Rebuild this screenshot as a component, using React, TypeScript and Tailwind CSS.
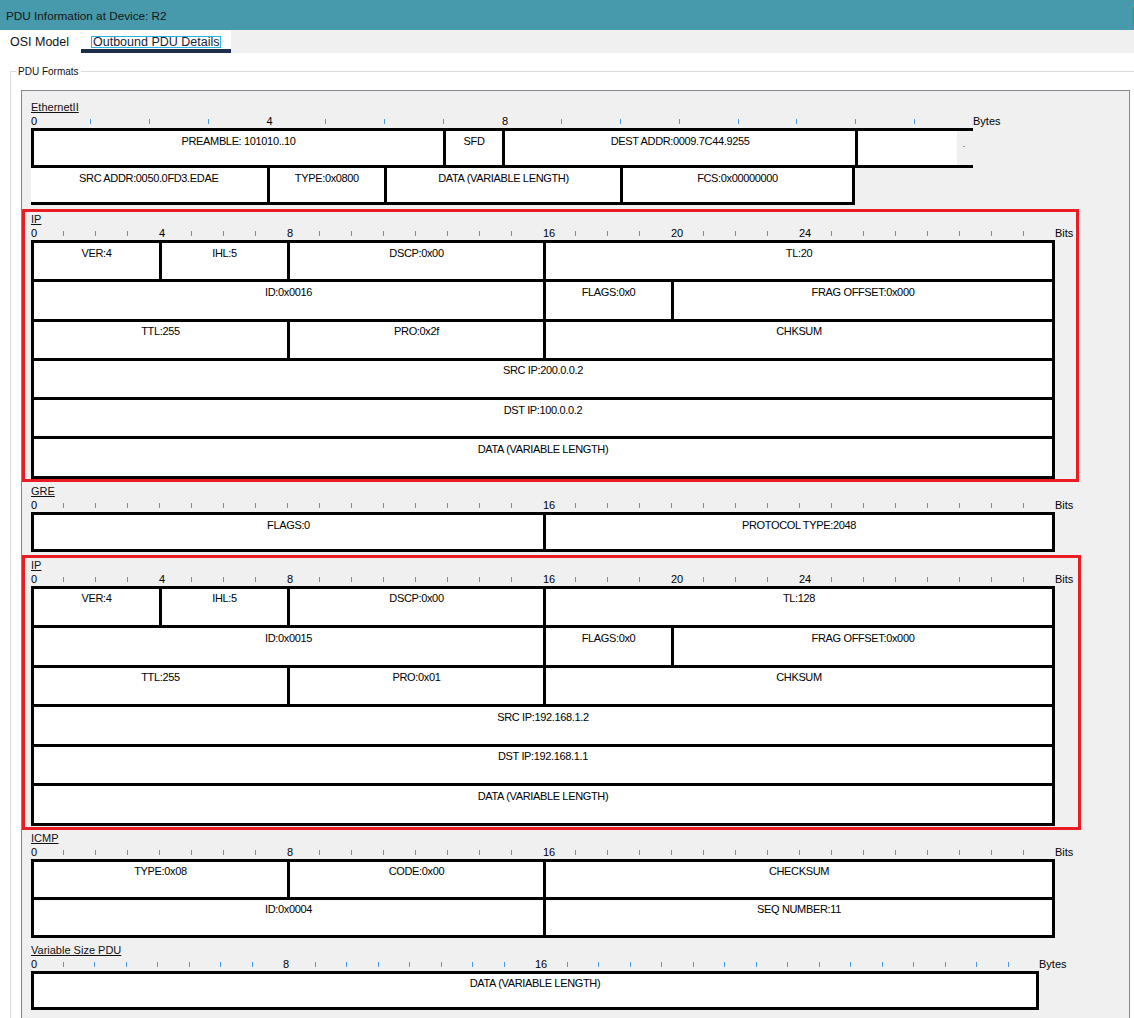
import React from 'react'

type Cell = { t?: string; s: number; noL?: boolean; partial?: boolean; spacer?: boolean }

interface Spec {
  name: string
  n: number
  w: number
  marks: number[]
  unit: string
  h: number
  rows: Cell[][]
}

const ethernet: Spec = {
  name: "EthernetII", n: 16, w: 58.875, marks: [0, 4, 8], unit: "Bytes", h: 37,
  rows: [
    [
      { t: "PREAMBLE: 101010..10", s: 7 },
      { t: "SFD", s: 1 },
      { t: "DEST ADDR:0009.7C44.9255", s: 6 },
      { s: 2, partial: true },
    ],
    [
      { t: "SRC ADDR:0050.0FD3.EDAE", s: 4, noL: true },
      { t: "TYPE:0x0800", s: 2 },
      { t: "DATA (VARIABLE LENGTH)", s: 4 },
      { t: "FCS:0x00000000", s: 4 },
      { s: 2, spacer: true },
    ],
  ],
}

const ipRows = (tl: string, id: string, pro: string, src: string, dst: string): Cell[][] => [
  [{ t: "VER:4", s: 4 }, { t: "IHL:5", s: 4 }, { t: "DSCP:0x00", s: 8 }, { t: "TL:" + tl, s: 16 }],
  [{ t: "ID:" + id, s: 16 }, { t: "FLAGS:0x0", s: 4 }, { t: "FRAG OFFSET:0x000", s: 12 }],
  [{ t: "TTL:255", s: 8 }, { t: "PRO:" + pro, s: 8 }, { t: "CHKSUM", s: 16 }],
  [{ t: "SRC IP:" + src, s: 32 }],
  [{ t: "DST IP:" + dst, s: 32 }],
  [{ t: "DATA (VARIABLE LENGTH)", s: 32 }],
]

const ip1: Spec = {
  name: "IP", n: 32, w: 32, marks: [0, 4, 8, 16, 20, 24], unit: "Bits", h: 39.25,
  rows: ipRows("20", "0x0016", "0x2f", "200.0.0.2", "100.0.0.2"),
}

const gre: Spec = {
  name: "GRE", n: 32, w: 32, marks: [0, 16], unit: "Bits", h: 36.5,
  rows: [[{ t: "FLAGS:0", s: 16 }, { t: "PROTOCOL TYPE:2048", s: 16 }]],
}

const ip2: Spec = {
  name: "IP", n: 32, w: 32, marks: [0, 4, 8, 16, 20, 24], unit: "Bits", h: 39.5,
  rows: ipRows("128", "0x0015", "0x01", "192.168.1.2", "192.168.1.1"),
}

const icmp: Spec = {
  name: "ICMP", n: 32, w: 32, marks: [0, 8, 16], unit: "Bits", h: 38,
  rows: [
    [{ t: "TYPE:0x08", s: 8 }, { t: "CODE:0x00", s: 8 }, { t: "CHECKSUM", s: 16 }],
    [{ t: "ID:0x0004", s: 16 }, { t: "SEQ NUMBER:11", s: 16 }],
  ],
}

const variable: Spec = {
  name: "Variable Size PDU", n: 32, w: 31.5, marks: [0, 8, 16], unit: "Bytes", h: 36,
  rows: [[{ t: "DATA (VARIABLE LENGTH)", s: 32 }]],
}

const Ruler = ({ spec }: { spec: Spec }) =>
  <div className="flex h-[14px] text-[11px] leading-[14px] text-black">
    {Array.from({ length: spec.n }, (_, i) =>
      <div key={i} className="shrink-0 whitespace-nowrap" style={{ width: spec.w }}>
        {spec.marks.includes(i)
          ? i
          : <div className="mt-[5px] h-[5px] w-px bg-[#4b9be2]" />}
      </div>)}
    <div className="whitespace-nowrap">{spec.unit}</div>
  </div>

const Rows = ({ spec }: { spec: Spec }) =>
  <div>
    {spec.rows.map((row, ri) => {
      const last = ri === spec.rows.length - 1
      const end = row.findLastIndex(c => !c.spacer)
      return <div key={ri} className="flex items-start">
        {row.map((c, ci) => {
          const width = c.s * spec.w
          if (c.spacer) return <div key={ci}
            className="shrink-0 box-border border-t-[3px] border-black"
            style={{ width, height: spec.h }} />

          if (c.partial) return <div key={ci}
            className="flex shrink-0 box-border border-t-[3px] border-l-[3px] border-black"
            style={{ width, height: spec.h }}>
            <div className="w-[99px] bg-white" />
            <div className="flex-1 bg-[#f0f0f0]">
              <div className="ml-[6px] mt-[15px] h-px w-[2px] bg-[#9a9a9a]" />
            </div>
          </div>

          const cls = [
            "shrink-0 box-border border-black bg-white border-t-[3px]",
            c.noL ? "" : "border-l-[3px]",
            ci === end ? "border-r-[3px]" : "",
            last ? "border-b-[3px]" : "",
          ].join(" ")
          return <div key={ci} className={cls}
            style={{ width, height: spec.h + (last ? 3 : 0) }}>
            <div className="pt-[3.5px] text-center text-[11px] leading-[13px] tracking-[-0.35px] whitespace-nowrap text-black"
              children={c.t} />
          </div>
        })}
      </div>
    })}
  </div>

const Format = ({ spec }: { spec: Spec }) =>
  <div>
    <div className="h-[14px] text-[11px] leading-[14px] text-[#111]">
      <span className="underline">{spec.name}</span>
    </div>
    <Ruler spec={spec} />
    <Rows spec={spec} />
  </div>

export default function App() {
  return <div className="h-[1018px] w-[1134px] overflow-hidden bg-white font-['Liberation_Sans',Arial,sans-serif] text-black">
    {/* title bar */}
    <div className="flex h-[30px] justify-between bg-[#469aac]">
      <div className="pl-[6px] text-[11.75px] leading-[31px] text-[#161616]">PDU Information at Device: R2</div>
      <div className="mt-[7px] h-[19px] w-[1.5px] bg-[#b9544f]" />
    </div>

    {/* tabs */}
    <div className="flex h-[23px] bg-[#f0f0f0] text-[12.5px]">
      <div className="w-[81px] bg-white pl-[10px] pt-[7px] leading-[10px] text-[#111]">OSI Model</div>
      <div className="box-border w-[150px] border-b-[4px] border-[#1c2e4c] bg-white pl-[10px] pt-[6px]">
        <div className="w-[130px] border border-[#2ab3e6] pl-[1px] leading-[10px] text-[#1a2436]">Outbound PDU Details</div>
      </div>
    </div>

    {/* group box */}
    <div className="pt-[18px]">
      <div className="relative ml-[10px] border-l border-t border-[#dcdcdc] pl-[10px] pt-[18px]">
        <div className="absolute -top-[7px] left-[5px] bg-white px-[2px] text-[10px] leading-[14px] text-[#111]">PDU Formats</div>

        <div className="h-[980px] w-[1109px] border-l border-r border-t border-[#828790] bg-[#f0f0f0] pt-[9px]">
          <div className="pl-[9px]"><Format spec={ethernet} /></div>

          <div className="mt-[4px] w-[1057px] border-[3px] border-[#ec1c24] pb-[0.5px] pl-[6px]">
            <Format spec={ip1} />
          </div>

          <div className="mt-[2px] pl-[9px]"><Format spec={gre} /></div>

          <div className="mt-[3px] w-[1059px] border-[3px] border-[#ec1c24] pb-[1px] pl-[6px]">
            <Format spec={ip2} />
          </div>

          <div className="mt-[1px] pl-[9px]"><Format spec={icmp} /></div>

          <div className="mt-[5px] pl-[9px]"><Format spec={variable} /></div>
        </div>
      </div>
    </div>
  </div>
}
